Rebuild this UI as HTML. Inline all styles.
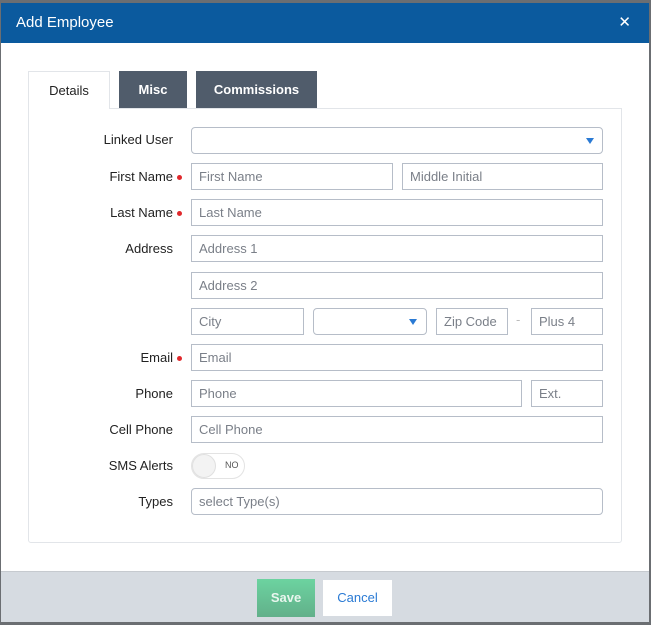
<!DOCTYPE html>
<html><head><style>
*{box-sizing:border-box;margin:0;padding:0}
body{width:651px;height:625px;background:#6b6e72;position:relative;overflow:hidden;font-family:"Liberation Sans",sans-serif}
.modal{position:absolute;left:1px;top:3px;width:648px;height:619px;background:#fff}
.hd{position:absolute;left:0;top:0;width:648px;height:40px;background:#0b5a9e;color:#fff;font-size:15px;line-height:40px;padding-left:15px}
.x{position:absolute;right:18px;top:0;font-size:15px}
.a{position:absolute}
.tab{position:absolute;top:68px;height:37px;font-size:13px;font-weight:bold;color:#fff;background:#505c6b;text-align:center;line-height:37px}
.panel{position:absolute;left:27px;top:105px;width:594px;height:435px;border:1px solid #e2e5e9;border-radius:0 0 3px 3px}
.lab{position:absolute;right:476px;font-size:13px;color:#222;text-align:right;line-height:27px}
.in{position:absolute;height:27px;border:1px solid #b6bdc8;font-size:13px;color:#7a7f88;padding-left:7px;line-height:25px;background:#fff}
.r{border-radius:4px}
.dot{position:absolute;left:176px;width:5px;height:5px;border-radius:50%;background:#e0282c}
.car{position:absolute;width:0;height:0;border-left:4px solid transparent;border-right:4px solid transparent;border-top:6px solid #2a7ad4}
.ft{position:absolute;left:0;top:568px;width:648px;height:51px;background:#d6dbe1;border-top:1px solid #c6cacf}
</style></head><body>
<div class="modal">
<div class="hd">Add Employee<span class="x">✕</span></div>
<div class="panel"></div>
<div class="tab" style="left:27px;width:82px;background:#fff;color:#222;font-weight:normal;border:1px solid #e2e5e9;border-bottom:none;height:38px;z-index:2">Details</div>
<div class="tab" style="left:118px;width:68px">Misc</div>
<div class="tab" style="left:195px;width:121px">Commissions</div>

<div class="lab" style="top:123px">Linked User</div>
<div class="in r" style="left:190px;top:124px;width:412px"></div><div class="car" style="left:585px;top:135px"></div>

<div class="lab" style="top:160px">First Name</div><div class="dot" style="top:172px"></div>
<div class="in" style="left:190px;top:160px;width:202px">First Name</div>
<div class="in" style="left:401px;top:160px;width:201px">Middle Initial</div>

<div class="lab" style="top:196px">Last Name</div><div class="dot" style="top:208px"></div>
<div class="in" style="left:190px;top:196px;width:412px">Last Name</div>

<div class="lab" style="top:232px">Address</div>
<div class="in" style="left:190px;top:232px;width:412px">Address 1</div>
<div class="in" style="left:190px;top:269px;width:412px">Address 2</div>
<div class="in" style="left:190px;top:305px;width:113px">City</div>
<div class="in r" style="left:312px;top:305px;width:114px"></div><div class="car" style="left:408px;top:316px"></div>
<div class="in" style="left:435px;top:305px;width:72px">Zip Code</div>
<div class="a" style="left:515px;top:309px;font-size:13px;color:#bbb">-</div>
<div class="in" style="left:530px;top:305px;width:72px">Plus 4</div>

<div class="lab" style="top:341px">Email</div><div class="dot" style="top:353px"></div>
<div class="in" style="left:190px;top:341px;width:412px">Email</div>

<div class="lab" style="top:377px">Phone</div>
<div class="in" style="left:190px;top:377px;width:331px">Phone</div>
<div class="in" style="left:530px;top:377px;width:72px">Ext.</div>

<div class="lab" style="top:413px">Cell Phone</div>
<div class="in" style="left:190px;top:413px;width:412px">Cell Phone</div>

<div class="lab" style="top:449px">SMS Alerts</div>
<div class="a" style="left:190px;top:450px;width:54px;height:26px;border:1px solid #e3e3e3;border-radius:13px;background:#fff"></div>
<div class="a" style="left:191px;top:451px;width:24px;height:24px;border-radius:50%;background:#f3f3f3;border:1px solid #e0e0e0"></div>
<div class="a" style="left:224px;top:457px;font-size:9px;color:#555">NO</div>

<div class="lab" style="top:485px">Types</div>
<div class="in r" style="left:190px;top:485px;width:412px">select Type(s)</div>

<div class="ft">
<div class="a" style="left:256px;top:7px;width:58px;height:38px;background:linear-gradient(#6cd3a0,#62b08a);color:#e9f6ee;font-weight:bold;font-size:13px;text-align:center;line-height:38px">Save</div>
<div class="a" style="left:322px;top:8px;width:69px;height:36px;background:#fff;color:#2a7ad4;font-size:13px;text-align:center;line-height:36px">Cancel</div>
</div>
</div>
</body></html>
